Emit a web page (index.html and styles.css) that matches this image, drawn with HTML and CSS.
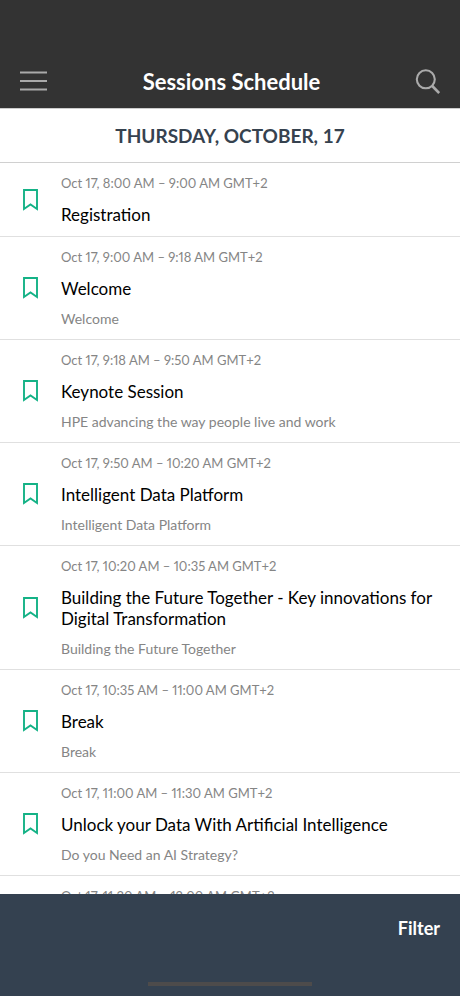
FILE: index.html
```html
<!DOCTYPE html>
<html lang="en">
<head>
<meta charset="utf-8">
<meta name="viewport" content="width=device-width, initial-scale=1">
<title>Sessions Schedule</title>
<link rel="stylesheet" href="styles.css">
</head>
<body>
<svg class="sprite" aria-hidden="true">
  <symbol id="bookmark" viewBox="0 0 15 22"><path d="M1 1H14V20L7.5 15.5L1 20Z" fill="none" stroke="currentColor" stroke-width="1.9"/></symbol>
</svg>
<header class="topbar">
  <button class="icon-button" type="button" aria-label="Menu">
    <svg width="28" height="22" viewBox="0 0 28 22"><path d="M0 1.5H27M0 10H27M0 18.5H27" fill="none" stroke="currentColor" stroke-width="2.2"/></svg>
  </button>
  <h1 class="topbar-title">Sessions Schedule</h1>
  <button class="icon-button" type="button" aria-label="Search">
    <svg width="25" height="26" viewBox="0 0 25 26"><circle cx="10.8" cy="10.3" r="9" fill="none" stroke="currentColor" stroke-width="2.1"/><path d="M17 16.8L24.2 24" fill="none" stroke="currentColor" stroke-width="2.7"/></svg>
  </button>
</header>
<h2 class="day">THURSDAY, OCTOBER, 17</h2>
<main class="sessions">
  <article class="session">
    <button class="bookmark" type="button" aria-label="Bookmark"><svg width="15" height="22"><use href="#bookmark"/></svg></button>
    <div class="details"><p class="time">Oct 17, 8:00 AM – 9:00 AM GMT+2</p><h3 class="name">Registration</h3></div>
  </article>
  <article class="session">
    <button class="bookmark" type="button" aria-label="Bookmark"><svg width="15" height="22"><use href="#bookmark"/></svg></button>
    <div class="details"><p class="time">Oct 17, 9:00 AM – 9:18 AM GMT+2</p><h3 class="name">Welcome</h3><p class="summary">Welcome</p></div>
  </article>
  <article class="session">
    <button class="bookmark" type="button" aria-label="Bookmark"><svg width="15" height="22"><use href="#bookmark"/></svg></button>
    <div class="details"><p class="time">Oct 17, 9:18 AM – 9:50 AM GMT+2</p><h3 class="name">Keynote Session</h3><p class="summary">HPE advancing the way people live and work</p></div>
  </article>
  <article class="session">
    <button class="bookmark" type="button" aria-label="Bookmark"><svg width="15" height="22"><use href="#bookmark"/></svg></button>
    <div class="details"><p class="time">Oct 17, 9:50 AM – 10:20 AM GMT+2</p><h3 class="name">Intelligent Data Platform</h3><p class="summary">Intelligent Data Platform</p></div>
  </article>
  <article class="session">
    <button class="bookmark" type="button" aria-label="Bookmark"><svg width="15" height="22"><use href="#bookmark"/></svg></button>
    <div class="details"><p class="time">Oct 17, 10:20 AM – 10:35 AM GMT+2</p><h3 class="name">Building the Future Together - Key innovations for Digital Transformation</h3><p class="summary">Building the Future Together</p></div>
  </article>
  <article class="session">
    <button class="bookmark" type="button" aria-label="Bookmark"><svg width="15" height="22"><use href="#bookmark"/></svg></button>
    <div class="details"><p class="time">Oct 17, 10:35 AM – 11:00 AM GMT+2</p><h3 class="name">Break</h3><p class="summary">Break</p></div>
  </article>
  <article class="session">
    <button class="bookmark" type="button" aria-label="Bookmark"><svg width="15" height="22"><use href="#bookmark"/></svg></button>
    <div class="details"><p class="time">Oct 17, 11:00 AM – 11:30 AM GMT+2</p><h3 class="name">Unlock your Data With Artificial Intelligence</h3><p class="summary">Do you Need an AI Strategy?</p></div>
  </article>
  <article class="session">
    <div class="details"><p class="time">Oct 17, 11:30 AM – 12:00 AM GMT+2</p></div>
  </article>
</main>
<footer class="bottombar">
  <button class="filter" type="button">Filter</button>
  <div class="home-indicator"></div>
</footer>
</body>
</html>
```

FILE: styles.css
```css
* { box-sizing: border-box; }

body {
  margin: 0;
  height: 100vh;
  display: flex;
  flex-direction: column;
  background: #fff;
  color: #000;
  font-family: Lato, "Open Sans", sans-serif;
}

h1, h2, h3, p { margin: 0; }

button {
  padding: 0;
  border: 0;
  background: none;
  color: inherit;
  font: inherit;
}

svg { display: block; }

.sprite {
  position: absolute;
  width: 0;
  height: 0;
}

.topbar {
  flex: none;
  display: flex;
  align-items: center;
  justify-content: space-between;
  padding: 68px 20px 13px;
  background: #333;
  border-bottom: 1px solid #ccc;
}

.icon-button { color: #aaa; }

.topbar-title {
  color: #fff;
  font-size: 22px;
  font-weight: 700;
  line-height: 27px;
}

.day {
  flex: none;
  padding: 13px 20px;
  border-bottom: 1px solid #d0d0d0;
  color: #36424f;
  font-size: 19px;
  font-weight: 700;
  line-height: 27px;
  text-align: center;
}

.sessions {
  flex: 1;
  min-height: 0;
  overflow: hidden;
}

.session {
  display: grid;
  grid-template-columns: 61px 1fr;
  align-items: center;
  padding: 11px 20px 11px 0;
  border-bottom: 1px solid #e0e0e0;
}

.bookmark {
  align-self: stretch;
  display: grid;
  place-items: center;
  color: #14b286;
}

.details { grid-column: 2; }

.time, .summary {
  color: #858585;
  font-size: 14px;
  line-height: 18px;
}

.time {
  font-size: 13px;
  font-variant-numeric: proportional-nums;
}

.name {
  margin-top: 12px;
  font-size: 17px;
  font-weight: 400;
  line-height: 21px;
}

.summary { margin-top: 11px; }

.bottombar {
  flex: none;
  display: flex;
  flex-direction: column;
  padding: 22px 20px 10px;
  background: #344150;
}

.filter {
  align-self: flex-end;
  color: #fff;
  font-size: 18px;
  font-weight: 700;
  line-height: 24px;
}

.home-indicator {
  align-self: center;
  width: 39%;
  height: 4px;
  margin-top: 42px;
  background: #4d4b4b;
}
```
